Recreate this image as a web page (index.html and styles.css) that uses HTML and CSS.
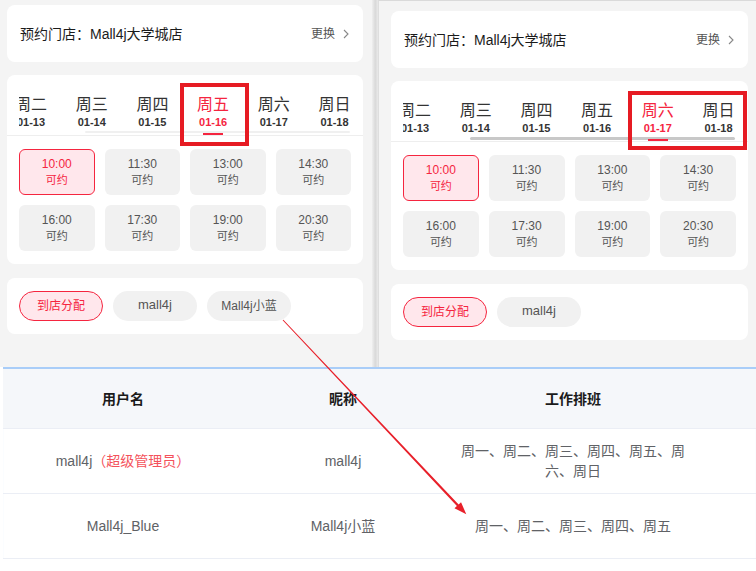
FILE: index.html
```html
<!DOCTYPE html>
<html lang="zh-CN">
<head>
<meta charset="utf-8">
<title>预约门店</title>
<link rel="stylesheet" href="styles.css">
</head>
<body>
<div class="page">
  <div class="top">
    <section class="panel panel-left">
      <div class="card store">
        <span class="store-name">预约门店：Mall4j大学城店</span>
        <span class="change">更换<svg class="chev" width="6" height="10" viewBox="0 0 6 10"><path d="M1 1l4 4-4 4" fill="none" stroke="#888" stroke-width="1.1"/></svg></span>
      </div>
      <div class="card schedule">
        <div class="tabs">
          <div class="tab-strip">
            <div class="tab"><span class="day">周一</span><span class="date">01-12</span><i class="line"></i></div>
            <div class="tab"><span class="day">周二</span><span class="date">01-13</span><i class="line"></i></div>
            <div class="tab"><span class="day">周三</span><span class="date">01-14</span><i class="line"></i></div>
            <div class="tab"><span class="day">周四</span><span class="date">01-15</span><i class="line"></i></div>
            <div class="tab active"><span class="day">周五</span><span class="date">01-16</span><i class="line"></i></div>
            <div class="tab"><span class="day">周六</span><span class="date">01-17</span><i class="line"></i></div>
            <div class="tab"><span class="day">周日</span><span class="date">01-18</span><i class="line"></i></div>
          </div>
          <div class="thumb thumb-faint"></div>
        </div>
        <div class="slots">
          <div class="slot selected"><span>10:00</span><span class="st">可约</span></div>
          <div class="slot"><span>11:30</span><span class="st">可约</span></div>
          <div class="slot"><span>13:00</span><span class="st">可约</span></div>
          <div class="slot"><span>14:30</span><span class="st">可约</span></div>
          <div class="slot"><span>16:00</span><span class="st">可约</span></div>
          <div class="slot"><span>17:30</span><span class="st">可约</span></div>
          <div class="slot"><span>19:00</span><span class="st">可约</span></div>
          <div class="slot"><span>20:30</span><span class="st">可约</span></div>
        </div>
      </div>
      <div class="card staff">
        <span class="pill selected">到店分配</span>
        <span class="pill pill-latin">mall4j</span>
        <span class="pill">Mall4j小蓝</span>
      </div>
    </section>
    <div class="sep"></div>
    <section class="panel panel-right">
      <div class="card store">
        <span class="store-name">预约门店：Mall4j大学城店</span>
        <span class="change">更换<svg class="chev" width="6" height="10" viewBox="0 0 6 10"><path d="M1 1l4 4-4 4" fill="none" stroke="#888" stroke-width="1.1"/></svg></span>
      </div>
      <div class="card schedule">
        <div class="tabs">
          <div class="tab-strip">
            <div class="tab"><span class="day">周一</span><span class="date">01-12</span><i class="line"></i></div>
            <div class="tab"><span class="day">周二</span><span class="date">01-13</span><i class="line"></i></div>
            <div class="tab"><span class="day">周三</span><span class="date">01-14</span><i class="line"></i></div>
            <div class="tab"><span class="day">周四</span><span class="date">01-15</span><i class="line"></i></div>
            <div class="tab"><span class="day">周五</span><span class="date">01-16</span><i class="line"></i></div>
            <div class="tab active"><span class="day">周六</span><span class="date">01-17</span><i class="line"></i></div>
            <div class="tab"><span class="day">周日</span><span class="date">01-18</span><i class="line"></i></div>
          </div>
          <div class="thumb"></div>
        </div>
        <div class="slots">
          <div class="slot selected"><span>10:00</span><span class="st">可约</span></div>
          <div class="slot"><span>11:30</span><span class="st">可约</span></div>
          <div class="slot"><span>13:00</span><span class="st">可约</span></div>
          <div class="slot"><span>14:30</span><span class="st">可约</span></div>
          <div class="slot"><span>16:00</span><span class="st">可约</span></div>
          <div class="slot"><span>17:30</span><span class="st">可约</span></div>
          <div class="slot"><span>19:00</span><span class="st">可约</span></div>
          <div class="slot"><span>20:30</span><span class="st">可约</span></div>
        </div>
      </div>
      <div class="card staff">
        <span class="pill selected">到店分配</span>
        <span class="pill pill-latin">mall4j</span>
      </div>
    </section>
  </div>

  <div class="table-wrap">
    <table class="grid">
      <colgroup>
        <col class="c1"><col class="c2"><col class="c3"><col class="c4">
      </colgroup>
      <thead>
        <tr><th>用户名</th><th>昵称</th><th>工作排班</th><th></th></tr>
      </thead>
      <tbody>
        <tr><td>mall4j<span class="role">（超级管理员）</span></td><td>mall4j</td><td>周一、周二、周三、周四、周五、周六、周日</td><td></td></tr>
        <tr><td>Mall4j_Blue</td><td>Mall4j小蓝</td><td>周一、周二、周三、周四、周五</td><td></td></tr>
      </tbody>
    </table>
  </div>

  <div class="mark mark-left"></div>
  <div class="mark mark-right"></div>
  <svg class="arrow" width="756" height="571" viewBox="0 0 756 571">
    <polygon fill="#e8202a" points="282.64,320.34 456.90,506.10 454.50,508.37 466.3,514.3 461.04,502.19 458.64,504.46 283.36,319.66"/>
  </svg>
</div>
</body>
</html>
```

FILE: styles.css
```css
* { box-sizing: border-box; }

html, body {
  margin: 0;
  padding: 0;
}

body {
  width: 756px;
  height: 571px;
  overflow: hidden;
  background: #ffffff;
  font-family: "Liberation Sans", "Noto Sans CJK SC", sans-serif;
  color: #333;
}

.page {
  position: relative;
  width: 756px;
  height: 571px;
}

.top {
  display: flex;
  height: 367px;
  background: #f4f4f4;
}

.panel {
  display: flex;
  flex-direction: column;
  min-width: 0;
}

.panel-left {
  flex: 0 0 372px;
  width: 372px;
  padding: 5px 9px 0 7px;
}

.sep {
  flex: 0 0 6px;
  width: 6px;
  background: linear-gradient(to right, #efefef, #d9d9d9 55%, #e9e9e9);
}

.panel-right {
  flex: 1 1 0;
  border-left: 1px solid #dedede;
  border-top: 1px solid #dadada;
  padding: 10px 8px 0 12px;
}

.card {
  background: #ffffff;
  border-radius: 8px;
}

.store {
  height: 57px;
  margin-bottom: 13px;
  display: flex;
  align-items: center;
  justify-content: space-between;
  padding: 0 14px 0 13px;
}

.store-name {
  font-size: 14px;
  color: #1b1b1b;
  line-height: 20px;
}

.change {
  display: flex;
  align-items: center;
  font-size: 12px;
  color: #555;
  line-height: 16px;
}

.chev {
  margin-left: 8px;
}

.schedule {
  margin-bottom: 14px;
}

.tabs {
  position: relative;
  height: 60px;
  margin: 0 12px;
  overflow: hidden;
}

.tab-strip {
  display: flex;
  margin-left: -79px;
}

.tab {
  flex: 0 0 60.7px;
  display: flex;
  flex-direction: column;
  align-items: center;
  padding-top: 20px;
}

.day {
  font-size: 16px;
  line-height: 20px;
  color: #333;
  white-space: nowrap;
}

.date {
  font-size: 11px;
  line-height: 14px;
  font-weight: bold;
  color: #333;
}

.line {
  display: block;
  position: relative;
  z-index: 1;
  width: 20px;
  height: 2px;
  margin-top: 4px;
  background: transparent;
}

.tab.active .day,
.tab.active .date {
  color: #f5253f;
}

.tab.active .line {
  background: #f5253f;
}

.thumb {
  position: absolute;
  left: 67px;
  top: 56px;
  width: 265px;
  height: 3px;
  border-radius: 2px;
  background: #c8c8c8;
}

.thumb-faint {
  left: 66px;
  top: 56px;
  height: 2px;
  background: #f0f0f0;
}

.slots {
  border-top: 1px solid #eeeeee;
  display: grid;
  grid-template-columns: repeat(4, 1fr);
  gap: 10px;
  padding: 13px 12px 13px 12px;
}

.slot {
  height: 46px;
  border-radius: 6px;
  background: #f1f1f1;
  display: flex;
  flex-direction: column;
  align-items: center;
  justify-content: center;
  color: #555;
  font-size: 12px;
  line-height: 16px;
}

.slot .st {
  font-size: 11px;
}

.slot.selected {
  background: #ffe7ec;
  border: 1px solid #f5253f;
  color: #f5253f;
}

.staff {
  height: 56px;
  display: flex;
  align-items: center;
  gap: 10px;
  padding: 0 12px;
}

.pill {
  flex: 0 0 84px;
  width: 84px;
  height: 30px;
  border-radius: 15px;
  background: #f1f1f1;
  color: #555;
  font-size: 12px;
  display: flex;
  align-items: center;
  justify-content: center;
  line-height: 16px;
}

.pill-latin {
  font-size: 13px;
  padding-bottom: 3px;
}

.pill.selected {
  background: #ffe7ec;
  border: 1px solid #f5253f;
  color: #f5253f;
}

.table-wrap {
  margin-left: 3px;
  border-top: 2px solid #a9cdf8;
  box-shadow: inset 0 1px 1px #d6e7fb;
}

.grid {
  width: 753px;
  border-collapse: separate;
  border-spacing: 0;
  table-layout: fixed;
  font-size: 14px;
}

.c1 { width: 240px; }
.c2 { width: 200px; }
.c3 { width: 260px; }
.c4 { width: 53px; }

.grid th {
  height: 60px;
  background: #f5f7fa;
  color: #1a1a1a;
  font-weight: bold;
  text-align: center;
  border-bottom: 1px solid #ebeef5;
  padding: 0 10px;
  line-height: 20px;
}

.grid td {
  height: 65px;
  text-align: center;
  color: #606266;
  border-bottom: 1px solid #ebeef5;
  padding: 0 10px;
  line-height: 20px;
}

.role {
  color: #f4525b;
}

.mark {
  position: absolute;
  border: 4px solid #e61b23;
}

.mark-left {
  left: 180px;
  top: 83px;
  width: 69px;
  height: 63px;
}

.mark-right {
  left: 628px;
  top: 91px;
  width: 119px;
  height: 59px;
}

.arrow {
  position: absolute;
  left: 0;
  top: 0;
  pointer-events: none;
}
```
